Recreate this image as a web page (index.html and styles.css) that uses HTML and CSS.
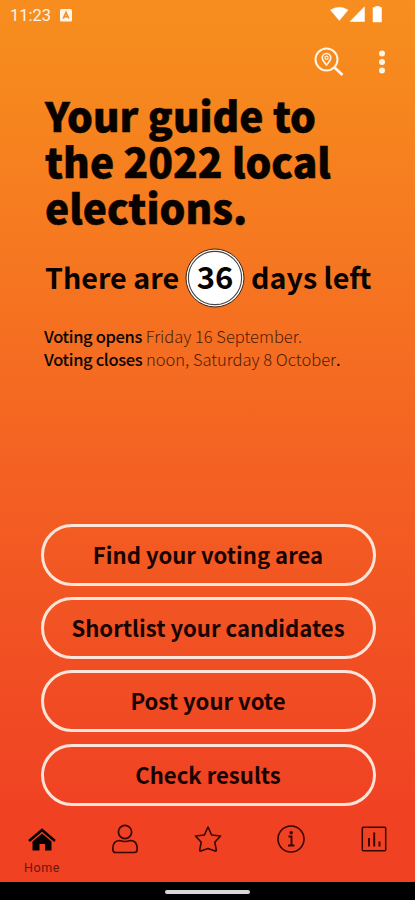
FILE: index.html
```html
<!DOCTYPE html>
<html lang="en">
<head>
<meta charset="utf-8">
<title>Local elections</title>
<link rel="stylesheet" href="styles.css">
</head>
<body>
<div class="screen">
  <header class="status">
    <span class="clock">11:23</span>
    <svg class="badge" width="12" height="13" viewBox="0 0 12 13"><rect width="12" height="12.500" rx="1.500" fill="#fff4e8"/><path d="M3.200 9.500 L6 3.500 L8.800 9.500 M4.200 7.600 H7.800" fill="none" stroke="#f58a25" stroke-width="1.600"/></svg>
    <svg class="signals" width="54" height="18" viewBox="0 0 54 18"><path d="M0.500 4 Q9.500 -1.500 18 4 L9.300 14.500 Z M34.500 0.800 V15.500 H20 Z M44.500 1.500 H45.500 V0.300 H49.500 V1.500 H51.500 V16 H43 V1.500 Z" fill="#fff" stroke="#fff" stroke-width="0.500" stroke-linejoin="round"/></svg>
  </header>
  <div class="toolbar">
    <svg width="30" height="30" viewBox="0 0 30 30" fill="none" stroke="#fff4e6"><circle cx="12.500" cy="12.500" r="11" stroke-width="2"/><path d="M20 20 L28.500 28" stroke-width="2.700"/><path d="M12.500 18 C10.500 15.600 8.200 13.200 8.200 10.800 A4.300 4.300 0 0 1 16.800 10.800 C16.800 13.200 14.500 15.600 12.500 18 Z" stroke-width="1.700"/><circle cx="12.500" cy="10.800" r="1.600" stroke-width="1.200"/></svg>
    <svg width="8" height="24" viewBox="0 0 8 24" fill="#fff4e6"><circle cx="4" cy="3.500" r="3"/><circle cx="4" cy="12" r="3"/><circle cx="4" cy="20.500" r="3"/></svg>
  </div>
  <main>
    <h1>Your guide to<br>the 2022 local<br>elections.</h1>
    <div class="countdown">
      <span class="left">There are</span>
      <span class="days"><svg width="60" height="60" viewBox="0 0 60 60"><circle cx="30" cy="30" r="29" fill="#fff" stroke="#3d2010" stroke-width="1"/><circle cx="30" cy="30" r="26.600" fill="none" stroke="#444" stroke-width="1.100"/></svg><b>36</b></span>
      <span class="right">days le<span class="join">f</span>t</span>
    </div>
    <p class="dates"><span><b>Voting opens</b> <i>Friday 16 September.</i></span><span class="second"><b>Voting closes</b> <i>noon, Saturday 8 October</i>.</span></p>
    <div class="actions">
      <button>Find your voting area</button>
      <button>Shortlist your candidates</button>
      <button>Post your vote</button>
      <button>Check results</button>
    </div>
  </main>
  <nav>
    <a><svg width="30" height="30" viewBox="0 0 30 30"><path d="M2 17 L15 6 L28 17" fill="none" stroke="#080000" stroke-width="2.600"/><path d="M15 9.500 L24.500 17.500 V26.500 H18 V20 H12.500 V26.500 H5.500 V17.500 Z" fill="#080000"/></svg><span>Home</span></a>
    <a><svg width="30" height="30" viewBox="0 0 30 30" fill="none" stroke="#360602" stroke-width="1.700"><circle cx="15" cy="8" r="6.600"/><path d="M9.500 16.500 Q15 18.500 20.500 16.500 C25 16.500 27.200 20 27.200 25 Q27.200 28.500 24.500 28.500 H5.500 Q2.800 28.500 2.800 25 C2.800 20 5 16.500 9.500 16.500 Z"/></svg></a>
    <a><svg width="30" height="30" viewBox="0 0 30 30" fill="none" stroke="#360602" stroke-width="1.600" stroke-linejoin="round"><path d="M15 3 L18.600 11 L27.500 12 L21.800 18.300 L23.300 26 Q23.300 27.800 21.500 26.800 L15 24.500 L8.500 26.800 Q6.700 27.800 6.700 26 L8.200 18.300 L2.500 12 L11.400 11 Z"/></svg></a>
    <a><svg width="30" height="30" viewBox="0 0 30 30" fill="none" stroke="#360602"><circle cx="15" cy="15" r="13" stroke-width="1.600"/><path d="M12.500 12.500 H15.500 V21 M12 21.500 H18.500" stroke-width="1.900"/><circle cx="15.200" cy="8.800" r="1.700" fill="#360602" stroke="none"/></svg></a>
    <a><svg width="30" height="30" viewBox="0 0 30 30" fill="none" stroke="#360602"><rect x="3.300" y="3.200" width="23.400" height="23.600" rx="1" stroke-width="1.500"/><path d="M10 14 V22.500 M15.200 8.500 V22.500 M20.500 17.500 V22.500" stroke-width="1.900"/></svg></a>
  </nav>
  <footer><div class="handle"></div></footer>
</div>
</body>
</html>
```
FILE: styles.css
```css
* { box-sizing: border-box; }
body { margin: 0; }
.screen {
  width: 415px;
  height: 900px;
  display: flex;
  flex-direction: column;
  overflow: hidden;
  background: linear-gradient(#f78e1e 0, #f6881e 80px, #f67a20 230px, #f46522 430px, #f15023 650px, #f04123 820px);
  font-family: "Noto Sans CJK SC", "Noto Sans", sans-serif;
  color: #090300;
}
.status { height: 32px; display: flex; align-items: center; padding: 0 32px 2px 10px; }
.clock { font: 400 16.5px/20px Roboto, sans-serif; color: #fff4e8; width: 50px; padding-top: 2px; white-space: nowrap; }
.signals { margin-left: auto; margin-right: -1px; }
.toolbar { height: 60px; display: flex; justify-content: flex-end; align-items: center; gap: 34px; padding-right: 29px; }
main { height: 729px; display: flex; flex-direction: column; }
h1 { margin: 0; padding-left: 45px; font-size: 40.7px; font-weight: 900; line-height: 46px; white-space: nowrap; -webkit-text-stroke: 0.5px #090300; }
.countdown { margin-top: 18px; height: 60px; padding-left: 45px; display: flex; align-items: center; font-size: 28.7px; font-weight: 700; line-height: 40px; white-space: nowrap; }
.left, .right { margin-top: -2px; }
.left { width: 140px; }
.days { width: 60px; height: 60px; display: grid; place-items: center; }
.days > * { grid-area: 1 / 1; }
.days b { font-size: 31px; font-weight: 700; margin-top: -4px; }
.right { margin-left: 6px; }
.join { letter-spacing: -0.8px; }
.dates { margin: 17px 0 0 44px; font-size: 16.5px; line-height: 23px; white-space: nowrap; }
.dates > span { display: block; }
.dates b { font-weight: 500; letter-spacing: -0.35px; }
.dates i { font-style: normal; font-weight: 300; color: #4d1c05; }
.actions { margin-top: auto; padding: 0 39.5px 15.5px 40.5px; display: flex; flex-direction: column; gap: 11.2px; }
button { height: 62px; padding: 0 0 2px; border: 3px solid #ffe4da; border-radius: 31px; background: none; font: 700 22.1px/32px "Noto Sans CJK SC", sans-serif; color: #180300; white-space: nowrap; }
nav { height: 61px; display: grid; grid-template-columns: repeat(5, 83px); }
nav a { display: flex; flex-direction: column; align-items: center; padding-top: 3px; }
nav span { font: 400 12.5px/16px Roboto, sans-serif; letter-spacing: 0.6px; color: #6b160d; margin-top: 6px; padding-left: 1px; }
footer { height: 18px; background: #000; display: flex; justify-content: center; padding-top: 8px; }
.handle { width: 85px; height: 4px; border-radius: 2px; background: #d8d8d8; }
```
